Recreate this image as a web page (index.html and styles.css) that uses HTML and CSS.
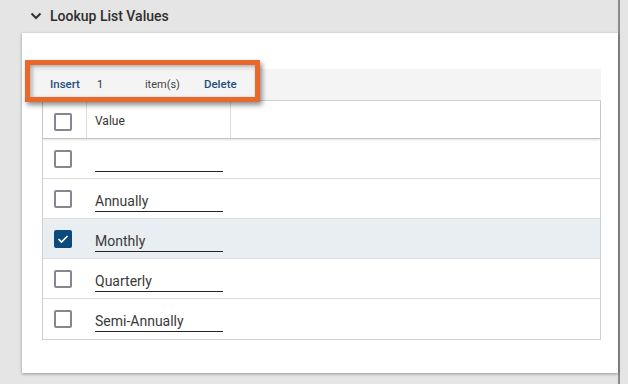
FILE: index.html
```html
<!DOCTYPE html>
<html lang="en">
<head>
    <meta charset="UTF-8">
    <meta name="viewport" content="width=device-width, initial-scale=1.0">
    <title>Lookup List Values</title>
    <link rel="stylesheet" href="styles.css">
</head>
<body>
    <div class="page">
        <div class="section-head">
            <svg class="chevron" width="12" height="8" viewBox="0 0 12 8">
                <path d="M1.5 1.5 L6 6 L10.5 1.5" fill="none" stroke="#333" stroke-width="2"/>
            </svg>
            <span class="section-title">Lookup List Values</span>
        </div>

        <div class="card">
            <div class="toolbar">
                <a class="tool-link">Insert</a>
                <span class="count">1</span>
                <span class="items">item(s)</span>
                <a class="tool-link">Delete</a>
            </div>

            <div class="grid">
                <div class="grid-head">
                    <div class="cell-check"><span class="check"></span></div>
                    <div class="cell-value">Value</div>
                    <div class="cell-rest"></div>
                </div>
                <div class="grid-row">
                    <div class="cell-check"><span class="check"></span></div>
                    <div class="cell-input"><input type="text" value=""></div>
                </div>
                <div class="grid-row">
                    <div class="cell-check"><span class="check"></span></div>
                    <div class="cell-input"><input type="text" value="Annually"></div>
                </div>
                <div class="grid-row selected">
                    <div class="cell-check">
                        <span class="check checked">
                            <svg width="12" height="10" viewBox="0 0 12 10">
                                <path d="M1.5 5 L4.5 8 L10.5 2" fill="none" stroke="#fff" stroke-width="1.6"/>
                            </svg>
                        </span>
                    </div>
                    <div class="cell-input"><input type="text" value="Monthly"></div>
                </div>
                <div class="grid-row">
                    <div class="cell-check"><span class="check"></span></div>
                    <div class="cell-input"><input type="text" value="Quarterly"></div>
                </div>
                <div class="grid-row">
                    <div class="cell-check"><span class="check"></span></div>
                    <div class="cell-input"><input type="text" value="Semi-Annually"></div>
                </div>
            </div>
        </div>

        <!-- highlight callout over the toolbar -->
        <div class="callout"></div>
    </div>
</body>
</html>
```

FILE: styles.css
```css
body {
    margin: 0;
    padding: 0;
    background-color: #e5e5e5;
    font-family: Roboto, "Liberation Sans", sans-serif;
    color: #333;
}

.page {
    position: relative;
    width: 620px;
    height: 384px;
    box-sizing: border-box;
    border-right: 2px solid #8a8a8a;
}

.section-head {
    display: flex;
    align-items: center;
    height: 33px;
    padding-left: 30px;
    box-sizing: border-box;
    padding-bottom: 1px;
}

.chevron {
    margin-right: 8px;
}

.section-title {
    font-size: 14px;
    font-weight: 500;
    color: #2e2e2e;
}

.card {
    margin-left: 22px;
    width: 596px;
    height: 340px;
    box-sizing: border-box;
    padding: 36px 17px 0 10px;
    background: #fff;
    box-shadow: 0 1px 3px rgba(0, 0, 0, 0.35);
}

.toolbar {
    display: flex;
    align-items: center;
    height: 31px;
    padding-left: 18px;
    padding-bottom: 1px;
    box-sizing: border-box;
    background: #f4f4f4;
    font-size: 11px;
}

.tool-link {
    color: #1d4f80;
    font-weight: 500;
    font-size: 11.5px;
}

.count {
    margin-left: 17px;
    width: 48px;
    color: #333;
}

.items {
    width: 59px;
    color: #444;
}

.grid {
    margin-left: 10px;
    border: 1px solid #cfcfcf;
}

.grid-head {
    display: flex;
    height: 38px;
    box-sizing: border-box;
    border-bottom: 1px solid #c4c4c4;
    box-shadow: 0 1px 2px rgba(0, 0, 0, 0.12);
    font-size: 12px;
}

.grid-head .cell-check {
    border-right: 1px solid #dcdcdc;
    padding-top: 4px;
}

.cell-check {
    width: 44px;
    display: flex;
    align-items: center;
    padding-left: 11px;
    box-sizing: border-box;
}

.cell-value {
    width: 144px;
    box-sizing: border-box;
    padding-left: 8px;
    padding-top: 2px;
    display: flex;
    align-items: center;
    border-right: 1px solid #dcdcdc;
}

.cell-rest {
    flex: 1;
}

.grid-row {
    display: flex;
    height: 40px;
    box-sizing: border-box;
    border-bottom: 1px solid #dedede;
}

.grid-row:last-child {
    border-bottom: none;
}

.grid-row.selected {
    background: #e9eef2;
}

.check {
    width: 18px;
    height: 18px;
    box-sizing: border-box;
    border: 2px solid #8a8391;
    border-radius: 2px;
    display: flex;
    align-items: center;
    justify-content: center;
}

.check.checked {
    background: #0d4a7b;
    border-color: #0d4a7b;
}

.cell-input {
    padding-left: 8px;
    padding-top: 11px;
}

.cell-input input {
    display: block;
    width: 128px;
    height: 22px;
    box-sizing: border-box;
    padding: 0;
    border: none;
    border-bottom: 1px solid #222;
    background: transparent;
    font-family: Roboto, "Liberation Sans", sans-serif;
    font-size: 14px;
    color: #3a3a3a;
    outline: none;
}

.callout {
    position: absolute;
    left: 25px;
    top: 60px;
    width: 235px;
    height: 42px;
    box-sizing: border-box;
    border: 5px solid #e8692b;
    box-shadow: 2px 3px 5px rgba(0, 0, 0, 0.45), inset 2px 2px 4px rgba(0, 0, 0, 0.35);
}
```
